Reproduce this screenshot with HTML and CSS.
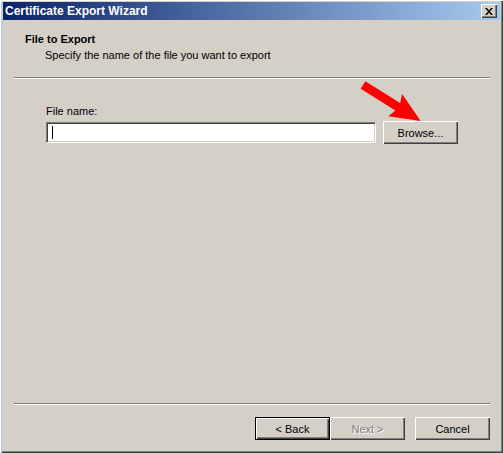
FILE: index.html
```html
<!DOCTYPE html>
<html>
<head>
<meta charset="utf-8">
<link rel="stylesheet" href="styles.css">
</head>
<body>
<div class="window">
  <div class="titlebar">
    <span class="title">Certificate Export Wizard</span>
    <span class="close"><svg width="8" height="7" viewBox="0 0 8 7"><path d="M0 0h2l2 2.5L6 0h2L5 3.5 8 7H6L4 4.5 2 7H0l3-3.5z" fill="#000"/></svg></span>
  </div>
  <div class="body">
    <div class="header">
      <div class="heading">File to Export</div>
      <div class="subheading">Specify the name of the file you want to export</div>
    </div>
    <div class="sep"></div>
    <div class="form">
      <div class="label">File name:</div>
      <div class="row">
        <div class="input"><span class="caret"></span></div>
        <div class="btn">Browse...</div>
      </div>
    </div>
    <div class="spacer"></div>
    <div class="sep"></div>
    <div class="buttons">
      <div class="btn default"><span>&lt; Back</span></div>
      <div class="btn disabled">Next &gt;</div>
      <div class="btn cancel">Cancel</div>
    </div>
  </div>
  <svg class="arrow" width="80" height="60" viewBox="0 0 80 60">
    <g transform="translate(8,9) rotate(32)">
      <polygon points="0,-4.5 41,-4.5 38,-13 68,0 38,13 41,4.5 0,4.5" fill="#ff0000"/>
    </g>
  </svg>
</div>
</body>
</html>
```
FILE: styles.css
```css
html, body {
  margin: 0;
  padding: 0;
  background: #d4d0c8;
}
.window {
  position: relative;
  width: 503px;
  height: 453px;
  box-sizing: border-box;
  padding: 2px 3px 3px 3px;
  display: flex;
  flex-direction: column;
  background: #d4d0c8;
  font-family: "Liberation Sans", Arial, sans-serif;
  font-size: 11px;
  color: #000;
  box-shadow: inset 1px 1px 0 #ffffff, inset 2px 0 0 #b9cbe4, inset -1px -1px 0 #404040, inset -2px -2px 0 #808080;
}
.titlebar {
  height: 18px;
  flex: none;
  display: flex;
  align-items: center;
  justify-content: space-between;
  padding: 0 3px 0 2px;
  background: linear-gradient(to right, #0a246a, #a6caf0);
}
.title {
  color: #fff;
  font-weight: bold;
  font-size: 12px;
}
.close {
  width: 16px;
  height: 14px;
  box-sizing: border-box;
  background: #d4d0c8;
  display: flex;
  align-items: center;
  justify-content: center;
  box-shadow: inset 1px 1px 0 #fff, inset -1px -1px 0 #404040, inset -2px -2px 0 #808080;
}
.body {
  flex: 1;
  display: flex;
  flex-direction: column;
  padding-bottom: 10px;
}
.header {
  padding: 11px 0 0 22px;
  line-height: 16px;
  height: 32px;
}
.heading {
  font-weight: bold;
}
.subheading {
  padding-left: 20px;
}
.sep {
  height: 1px;
  border-bottom: 1px solid #fff;
  background: #808080;
  margin: 14px 10px 0 11px;
  flex: none;
}
.form {
  padding: 24px 0 0 43px;
}
.label {
  line-height: 16px;
}
.row {
  display: flex;
  align-items: flex-start;
  margin-top: 2px;
}
.input {
  margin-top: 1px;
  width: 330px;
  height: 21px;
  box-sizing: border-box;
  background: #fff;
  border-top: 1px solid #808080;
  border-left: 1px solid #808080;
  border-right: 1px solid #fff;
  border-bottom: 1px solid #fff;
  box-shadow: inset 1px 1px 0 #404040, inset -1px -1px 0 #d4d0c8;
  padding: 3px 0 0 5px;
}
.caret {
  display: block;
  width: 1px;
  height: 13px;
  background: #000;
}
.btn {
  width: 75px;
  height: 23px;
  box-sizing: border-box;
  margin-left: 7px;
  display: flex;
  align-items: center;
  justify-content: center;
  background: #d4d0c8;
  box-shadow: inset 1px 1px 0 #fff, inset -1px -1px 0 #404040, inset -2px -2px 0 #808080;
}
.spacer {
  flex: 1;
}
.buttons {
  display: flex;
  justify-content: flex-end;
  padding: 12px 10px 0 0;
}
.buttons .btn {
  margin-left: 0;
}
.btn.default {
  border: 1px solid #000;
  box-shadow: inset 1px 1px 0 #fff, inset -1px -1px 0 #404040, inset -2px -2px 0 #808080;
}
.btn.disabled {
  color: #808080;
  text-shadow: 1px 1px 0 #fff;
}
.btn.cancel {
  margin-left: 10px;
}
.arrow {
  position: absolute;
  left: 355px;
  top: 76px;
}
```
